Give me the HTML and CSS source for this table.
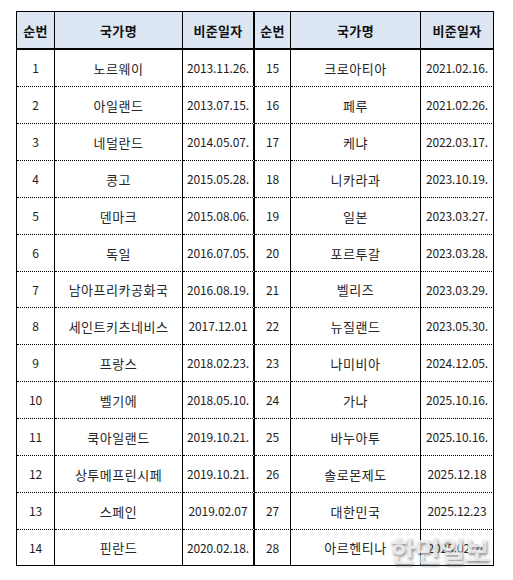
FILE: index.html
```html
<!DOCTYPE html>
<html lang="ko">
<head>
<meta charset="utf-8">
<link rel="stylesheet" href="styles.css">
</head>
<body>
<div class="sheet">
  <div class="grid">
    <div class="c h">순번</div><div class="c h">국가명</div><div class="c h mid">비준일자</div><div class="c h">순번</div><div class="c h">국가명</div><div class="c h">비준일자</div>

    <div class="c">1</div><div class="c n">노르웨이</div><div class="c mid">2013.11.26.</div><div class="c">15</div><div class="c n">크로아티아</div><div class="c">2021.02.16.</div>
    <div class="c">2</div><div class="c n">아일랜드</div><div class="c mid">2013.07.15.</div><div class="c">16</div><div class="c n">페루</div><div class="c">2021.02.26.</div>
    <div class="c">3</div><div class="c n">네덜란드</div><div class="c mid">2014.05.07.</div><div class="c">17</div><div class="c n">케냐</div><div class="c">2022.03.17.</div>
    <div class="c">4</div><div class="c n">콩고</div><div class="c mid">2015.05.28.</div><div class="c">18</div><div class="c n">니카라과</div><div class="c">2023.10.19.</div>
    <div class="c">5</div><div class="c n">덴마크</div><div class="c mid">2015.08.06.</div><div class="c">19</div><div class="c n">일본</div><div class="c">2023.03.27.</div>
    <div class="c">6</div><div class="c n">독일</div><div class="c mid">2016.07.05.</div><div class="c">20</div><div class="c n">포르투갈</div><div class="c">2023.03.28.</div>
    <div class="c">7</div><div class="c n">남아프리카공화국</div><div class="c mid">2016.08.19.</div><div class="c">21</div><div class="c n">벨리즈</div><div class="c">2023.03.29.</div>
    <div class="c">8</div><div class="c n">세인트키츠네비스</div><div class="c mid">2017.12.01</div><div class="c">22</div><div class="c n">뉴질랜드</div><div class="c">2023.05.30.</div>
    <div class="c">9</div><div class="c n">프랑스</div><div class="c mid">2018.02.23.</div><div class="c">23</div><div class="c n">나미비아</div><div class="c">2024.12.05.</div>
    <div class="c">10</div><div class="c n">벨기에</div><div class="c mid">2018.05.10.</div><div class="c">24</div><div class="c n">가나</div><div class="c">2025.10.16.</div>
    <div class="c">11</div><div class="c n">쿡아일랜드</div><div class="c mid">2019.10.21.</div><div class="c">25</div><div class="c n">바누아투</div><div class="c">2025.10.16.</div>
    <div class="c">12</div><div class="c n">상투메프린시페</div><div class="c mid">2019.10.21.</div><div class="c">26</div><div class="c n">솔로몬제도</div><div class="c">2025.12.18</div>
    <div class="c">13</div><div class="c n">스페인</div><div class="c mid">2019.02.07</div><div class="c">27</div><div class="c n">대한민국</div><div class="c">2025.12.23</div>
    <div class="c last">14</div><div class="c n last">핀란드</div><div class="c mid last">2020.02.18.</div><div class="c last">28</div><div class="c n last">아르헨티나</div><div class="c last">2025.02.24</div>
  </div>
  <div class="watermark">한민일보</div>
</div>
</body>
</html>
```

FILE: styles.css
```css
html, body {
  margin: 0;
  padding: 0;
  background: #ffffff;
}

body {
  font-family: "Noto Sans CJK KR", "Noto Sans", sans-serif;
  color: #1e1e1e;
}

.sheet {
  position: relative;
  width: 513px;
  height: 580px;
  padding: 11px 0 0 16px;
  box-sizing: border-box;
}

.grid {
  display: grid;
  grid-template-columns: 38px 128px 72px 36px 130px 73px;
  grid-template-rows: 38px repeat(6, 37px) 36px repeat(5, 37px) 37px 36px;
  width: max-content;
  border-left: 1px solid #000;
  border-top: 1px solid #000;
}

.c {
  box-sizing: border-box;
  display: flex;
  align-items: center;
  justify-content: center;
  border-right: 1px solid #000;
  border-bottom: 1px dotted #000;
  font-size: 12px;
  line-height: 1;
  white-space: nowrap;
  letter-spacing: -0.1px;
}

.n {
  font-size: 13px;
  letter-spacing: 0.5px;
  color: #262626;
}

.h {
  background: #dce6f2;
  border-bottom: 2px solid #000;
  font-weight: bold;
  font-size: 13px;
  letter-spacing: 0.3px;
  color: #111;
}

.mid {
  border-right: 2px solid #000;
}

.last {
  border-bottom: 1px solid #000;
}

.watermark {
  position: absolute;
  left: 390px;
  top: 530px;
  font-size: 28px;
  font-weight: bold;
  letter-spacing: -1px;
  color: rgba(242, 242, 242, 0.85);
  text-shadow: 1px 2px 3px rgba(90, 90, 90, 0.7);
  white-space: nowrap;
}
```
